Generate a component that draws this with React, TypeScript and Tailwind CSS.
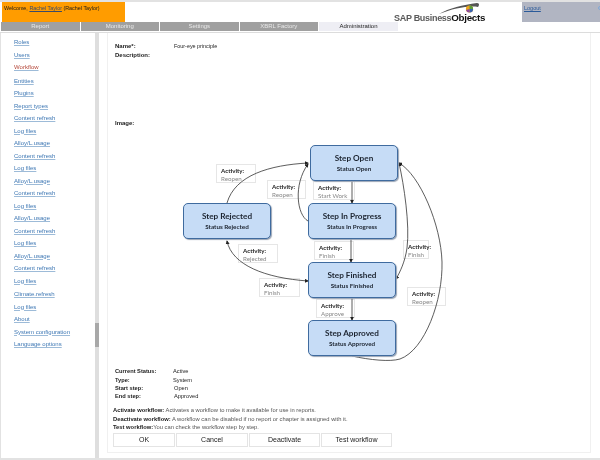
const sans = "font-['Liberation_Sans',Arial,sans-serif]"

const tabs = ['Report', 'Monitoring', 'Settings', 'XBRL Factory']

const links: [string, string][] = [
  ['Roles', 'h-[12.5px]'],
  ['Users', 'h-[12.5px]'],
  ['Workflow', 'h-[13.5px] text-[#b5483a]'],
  ['Entities', 'h-[12.5px]'],
  ['Plugins', 'h-[12.5px]'],
  ['Report types', 'h-[12.5px]'],
  ['Content refresh', 'h-[12.5px]'],
  ['Log files', 'h-[12.5px]'],
  ['Alloy/L.usage', 'h-[12.5px]'],
  ['Content refresh', 'h-[12.5px]'],
  ['Log files', 'h-[12.5px]'],
  ['Alloy/L.usage', 'h-[12.5px]'],
  ['Content refresh', 'h-[12.5px]'],
  ['Log files', 'h-[12.5px]'],
  ['Alloy/L.usage', 'h-[12.5px]'],
  ['Content refresh', 'h-[12.5px]'],
  ['Log files', 'h-[12.5px]'],
  ['Alloy/L.usage', 'h-[12.5px]'],
  ['Content refresh', 'h-[12.5px]'],
  ['Log files', 'h-[13px]'],
  ['Climate.refresh', 'h-[13px]'],
  ['Log files', 'h-[12.5px]'],
  ['About', 'h-[12.5px]'],
  ['System configuration', 'h-[12.5px]'],
  ['Language options', 'h-[12.5px]'],
]

function Step({ title, status, className }: { title: string; status: string; className: string }) {
  return (
    <div
      className={`absolute flex h-[36px] w-[88px] flex-col items-center justify-center rounded-[5px] border-[1.5px] border-[#3f6b9f] bg-[#c6dcf6] shadow-[1px_1px_1px_#9aa5b5] ${className}`}
    >
      <span className="text-[8.2px] leading-[11px] font-bold text-[#1c2430]">{title}</span>
      <span className="text-[6.3px] leading-[9px] font-bold text-[#1c2430]">{status}</span>
    </div>
  )
}

function Activity({ text, className }: { text: string; className: string }) {
  return (
    <div className={`absolute flex h-[19px] flex-col border border-[#e6e6e6] bg-white pt-[2px] pl-[4px] ${className}`}>
      <span className="text-[6.2px] leading-[7.5px] font-bold text-[#222]">Activity:</span>
      <span className="text-[6.2px] leading-[7.5px] text-[#888]">{text}</span>
    </div>
  )
}

function Arrows() {
  return (
    <svg className="absolute top-0 left-0 z-10" width="600" height="460" fill="none" stroke="#333" strokeWidth="0.8">
      <defs>
        <marker id="tip" markerWidth="5" markerHeight="5" refX="4" refY="2.5" orient="auto-start-reverse">
          <path d="M0 0L5 2.5L0 5Z" fill="#222" stroke="none" />
        </marker>
      </defs>
      <path d="M227 203C235 175 270 165 308 163" markerEnd="url(#tip)" />
      <path d="M308 221C297 215 293 185 308 164" markerEnd="url(#tip)" />
      <path d="M352 181L352 203" markerEnd="url(#tip)" />
      <path d="M351 239L351 262" markerEnd="url(#tip)" />
      <path d="M352 298L352 320" markerEnd="url(#tip)" />
      <path d="M227 241C232 265 265 278 308 281" markerStart="url(#tip)" markerEnd="url(#tip)" />
      <path d="M399 163C404 185 410 225 407 248C405 262 400 272 396 279" markerStart="url(#tip)" markerEnd="url(#tip)" />
      <path d="M352 356C370 360 390 362 400 359C425 350 443 300 442 262C441 225 420 175 399 163" markerEnd="url(#tip)" />
    </svg>
  )
}

function Logo() {
  return (
    <div className="relative mr-[37px] h-[22px] w-[92px]">
      <svg className="absolute top-0 left-0" width="92" height="14" fill="none">
        <path d="M46 12C56 6 70 3 84 1C87 1 86 4 85 5C78 3 60 6 46 12Z" fill="#555" />
        <circle cx="76.5" cy="7" r="3.6" fill="#e8a21c" />
        <path d="M76.5 3.4A3.6 3.6 0 0 1 80.1 7L76.5 7Z" fill="#5a9e3a" />
        <path d="M76.5 7L80.1 7A3.6 3.6 0 0 1 76.5 10.6Z" fill="#3a63b0" />
        <path d="M76.5 7L76.5 10.6A3.6 3.6 0 0 1 73 8Z" fill="#8d4aa0" />
      </svg>
      <div className="absolute top-[10px] left-[1px] text-[9px] leading-[11px] font-bold tracking-[-0.3px] whitespace-nowrap text-[#5a5a5a]">
        SAP Business<span className="text-[9.8px] text-[#111]">Objects</span>
      </div>
    </div>
  )
}

export default function App() {
  return (
    <div className={`flex h-[460px] w-[600px] flex-col overflow-hidden bg-white text-[6px] blur-[0.3px] ${sans}`}>
      {/* header */}
      <div className="flex h-[22px] items-stretch border-t-2 border-[#e2e2e2] pl-[2px]">
        <div className="w-[123px] bg-[#ff9c00] pt-[2px] pl-[2px] text-[5.4px] text-[#1a1a1a]">
          Welcome, <span className="text-[#3a4a6a] underline">Rachel Taylor</span> (Rachel Taylor)
        </div>
        <div className="flex flex-1 justify-end">
          <Logo />
        </div>
        <div className="flex w-[78px] justify-between bg-[#b1b5c2] pt-[2px] pl-[2px] text-[5.5px] text-[#2a5a9a]">
          <span className="underline">Logout</span>
          <span className="mt-[2px] size-[4px] translate-x-[2px] rounded-full border border-[#7fa8d8]" />
        </div>
      </div>

      {/* tabs */}
      <div className="flex h-[9px] items-stretch pl-[1px] text-[6px] leading-[9px]">
        {tabs.map((tab) => (
          <div key={tab} className="mr-[1px] w-[78.5px] bg-[#a0a0a0] text-center text-[#e8e8e8]">
            {tab}
          </div>
        ))}
        <div className="w-[79px] bg-[#eeeef4] text-center text-[#222]">Administration</div>
      </div>
      <div className="mt-[1px] h-[1px] bg-[#dcdcdc]" />

      <div className="flex flex-1 overflow-hidden border-b-2 border-[#e2e2e2]">
        {/* sidebar */}
        <div className="flex w-[95px] flex-col border-l border-[#e2e2e2] pt-[3px] pl-[13px] text-[6px] leading-[12.5px] text-[#3f78b4]">
          {links.map(([label, extra], i) => (
            <span key={i} className={`underline decoration-[#9dbbd8] ${extra}`}>
              {label}
            </span>
          ))}
        </div>
        <div className="flex w-[4px] flex-col bg-[#dedede] pt-[290px]">
          <div className="h-[24px] bg-[#a8a8a8]" />
        </div>

        {/* main panel */}
        <div className="mb-[5px] ml-[8px] flex w-[484px] flex-col border-r border-b border-l border-[#f0f0f0] pt-[9px] pl-[7px] text-[#222]">
          <div className="flex h-[9px] leading-[9px]">
            <span className="w-[59px] font-bold">Name*:</span>
            <span className="text-[5.4px]">Four-eye principle</span>
          </div>
          <div className="h-[9px] leading-[9px] font-bold">Description:</div>
          <div className="mt-[59px] h-[9px] leading-[9px] font-bold">Image:</div>
          <div className="flex-1" />
          <div className="flex h-[8.3px] text-[5.7px] leading-[8px]">
            <span className="w-[58px] font-bold">Current Status:</span>
            <span>Active</span>
          </div>
          <div className="flex h-[8.3px] text-[5.7px] leading-[8px]">
            <span className="w-[58px] font-bold">Type:</span>
            <span>System</span>
          </div>
          <div className="flex h-[8.3px] text-[5.7px] leading-[8px]">
            <span className="w-[59px] font-bold">Start step:</span>
            <span>Open</span>
          </div>
          <div className="flex h-[8.3px] text-[5.7px] leading-[9px]">
            <span className="w-[59px] font-bold">End step:</span>
            <span>Approved</span>
          </div>
          <div className="mt-[6px] -ml-[2px] text-[5.8px] leading-[8.2px] text-[#555]">
            <div>
              <b className="text-[#222]">Activate workflow:</b> Activates a workflow to make it available for use in reports.
            </div>
            <div>
              <b className="text-[#222]">Deactivate workflow:</b> A workflow can be disabled if no report or chapter is assigned with it.
            </div>
            <div>
              <b className="text-[#222]">Test workflow:</b>You can check the workflow step by step.
            </div>
          </div>
          <div className="mt-[2px] mb-[5px] -ml-[2px] flex h-[14px] gap-[1px] text-[7px] text-[#222]">
            {['OK', 'Cancel', 'Deactivate', 'Test workflow'].map((b, i) => (
              <button
                key={b}
                className={`border border-[#e4e4e4] bg-white leading-[12px] ${i === 0 ? 'w-[62px]' : i === 1 ? 'w-[72px]' : 'w-[71px]'}`}
              >
                {b}
              </button>
            ))}
          </div>
        </div>
      </div>

      {/* workflow diagram, drawn on a free canvas */}
      <div className="absolute top-0 left-0 h-0 w-0 font-['Lato',sans-serif]">
        <Activity text="Reopen" className="top-[164px] left-[216px] w-[40px]" />
        <Activity text="Reopen" className="top-[180px] left-[267px] w-[39px]" />
        <Activity text="Start Work" className="top-[181px] left-[313px] w-[42px]" />
        <Activity text="Rejected" className="top-[244px] left-[238px] w-[40px]" />
        <Activity text="Finish" className="top-[278px] left-[259px] w-[41px]" />
        <Activity text="Finish" className="top-[241px] left-[314px] w-[40px]" />
        <Activity text="Finish" className="top-[240px] left-[403px] w-[26px]" />
        <Activity text="Reopen" className="top-[287px] left-[407px] w-[39px]" />
        <Activity text="Approve" className="top-[299px] left-[316px] w-[39px]" />
        <Arrows />
        <Step title="Step Open" status="Status Open" className="top-[145px] left-[310px] z-20" />
        <Step title="Step In Progress" status="Status In Progress" className="top-[203px] left-[308px] z-20" />
        <Step title="Step Rejected" status="Status Rejected" className="top-[203px] left-[183px] z-20" />
        <Step title="Step Finished" status="Status Finished" className="top-[262px] left-[308px] z-20" />
        <Step title="Step Approved" status="Status Approved" className="top-[320px] left-[308px] z-20" />
      </div>
    </div>
  )
}
